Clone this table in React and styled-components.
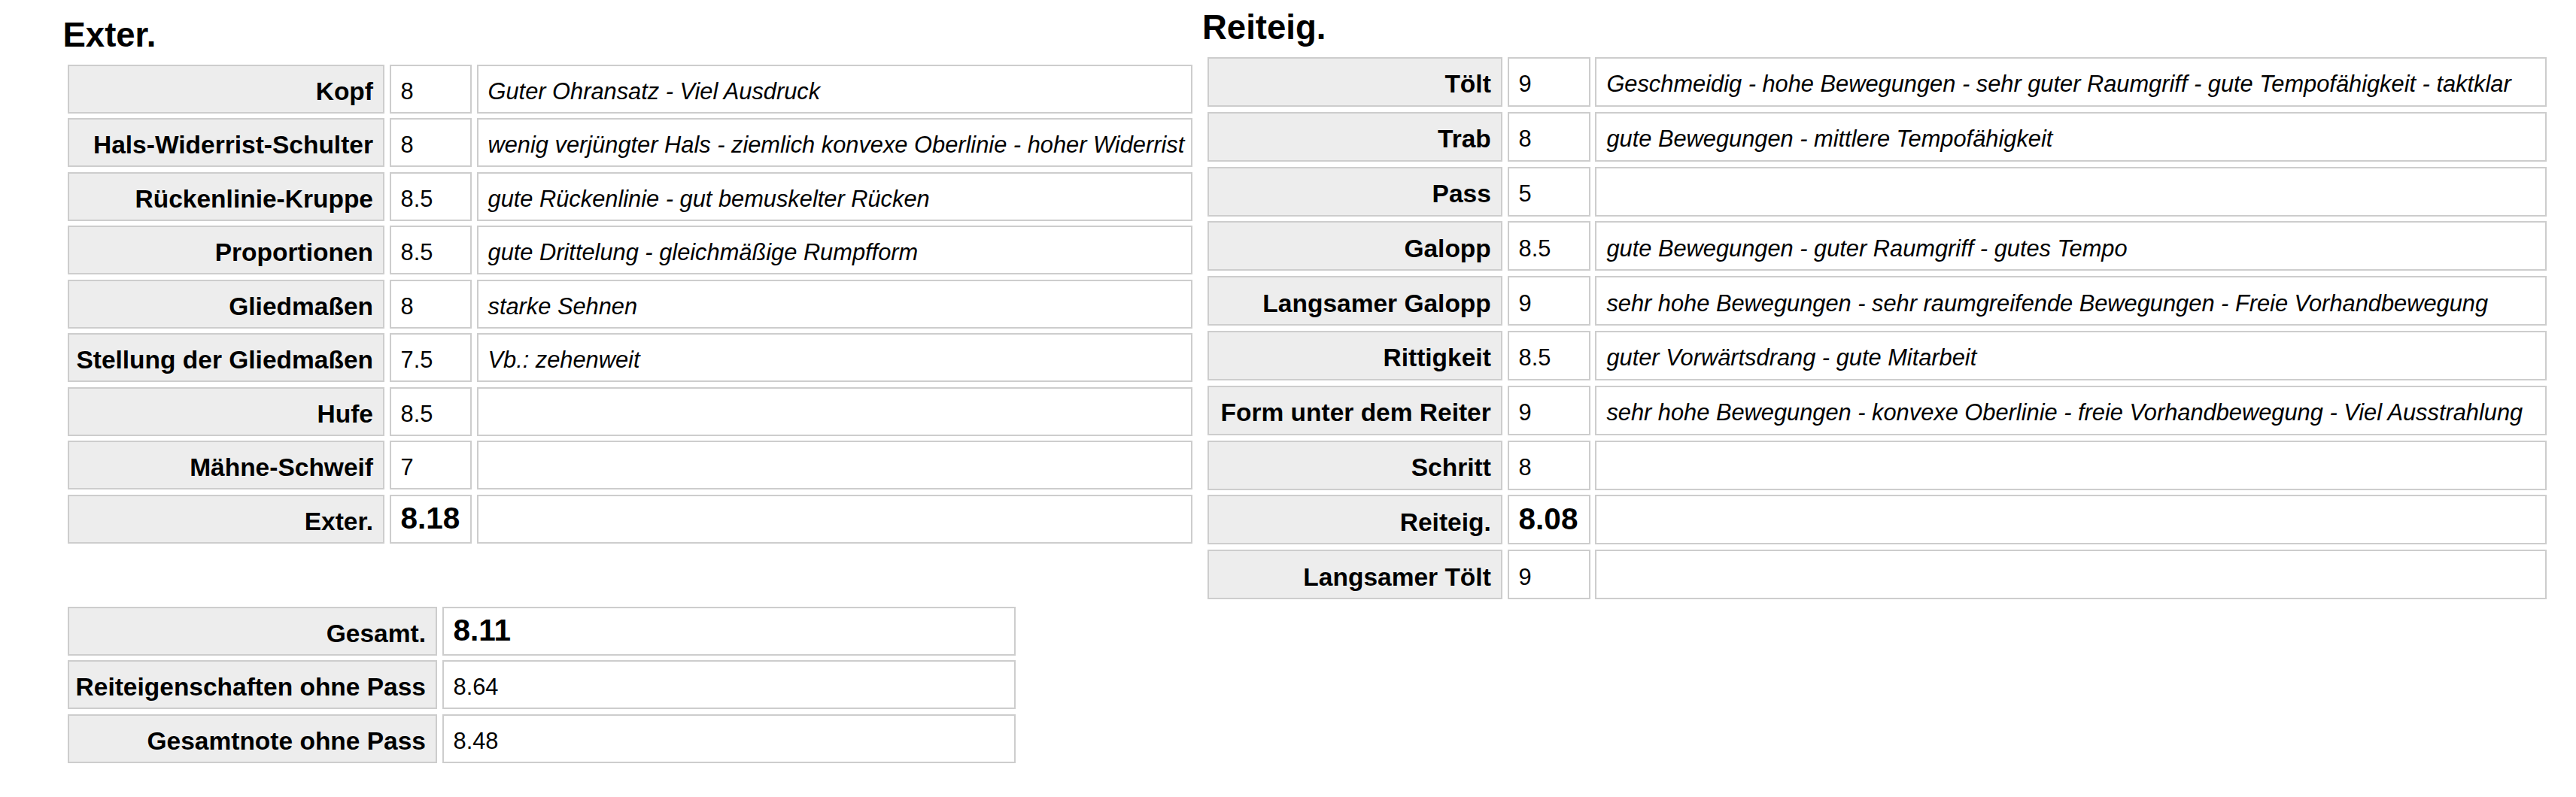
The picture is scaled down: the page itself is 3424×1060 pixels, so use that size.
import React from "react";
import styled, { createGlobalStyle } from "styled-components";

const exterRows = [
  ["Kopf", "8", "Guter Ohransatz - Viel Ausdruck"],
  ["Hals-Widerrist-Schulter", "8", "wenig verjüngter Hals - ziemlich konvexe Oberlinie - hoher Widerrist"],
  ["Rückenlinie-Kruppe", "8.5", "gute Rückenlinie - gut bemuskelter Rücken"],
  ["Proportionen", "8.5", "gute Drittelung - gleichmäßige Rumpfform"],
  ["Gliedmaßen", "8", "starke Sehnen"],
  ["Stellung der Gliedmaßen", "7.5", "Vb.: zehenweit"],
  ["Hufe", "8.5", ""],
  ["Mähne-Schweif", "7", ""],
  ["Exter.", "8.18", "", true],
];

const reitRows = [
  ["Tölt", "9", "Geschmeidig - hohe Bewegungen - sehr guter Raumgriff - gute Tempofähigkeit - taktklar"],
  ["Trab", "8", "gute Bewegungen - mittlere Tempofähigkeit"],
  ["Pass", "5", ""],
  ["Galopp", "8.5", "gute Bewegungen - guter Raumgriff - gutes Tempo"],
  ["Langsamer Galopp", "9", "sehr hohe Bewegungen - sehr raumgreifende Bewegungen - Freie Vorhandbewegung"],
  ["Rittigkeit", "8.5", "guter Vorwärtsdrang - gute Mitarbeit"],
  ["Form unter dem Reiter", "9", "sehr hohe Bewegungen - konvexe Oberlinie - freie Vorhandbewegung - Viel Ausstrahlung"],
  ["Schritt", "8", ""],
  ["Reiteig.", "8.08", "", true],
  ["Langsamer Tölt", "9", ""],
];

const totalRows = [
  ["Gesamt.", "8.11", true],
  ["Reiteigenschaften ohne Pass", "8.64"],
  ["Gesamtnote ohne Pass", "8.48"],
];

function ScoreTable({ rows, cols, rowH, gap }) {
  return (
    <Grid $cols={cols} $rowH={rowH} $gap={gap}>
      {rows.map(([label, value, note, big]) => (
        <React.Fragment key={label}>
          <LabelCell>{label}</LabelCell>
          <ValueCell $big={big}>{value}</ValueCell>
          <NoteCell>{note}</NoteCell>
        </React.Fragment>
      ))}
    </Grid>
  );
}

export default function App() {
  return (
    <>
      <GlobalStyle />
      <Page>
        <Column $offset={10}>
          <Heading>Exter.</Heading>
          <ScoreTable rows={exterRows} cols="421px 109.5px 951px" rowH={65} gap={6.5} />
          <Totals $cols="491px 762.5px" $rowH={65} $gap={6.5}>
            {totalRows.map(([label, value, big]) => (
              <React.Fragment key={label}>
                <LabelCell>{label}</LabelCell>
                <ValueCell $big={big}>{value}</ValueCell>
              </React.Fragment>
            ))}
          </Totals>
        </Column>
        <Column $offset={0}>
          <Heading>Reiteig.</Heading>
          <ScoreTable rows={reitRows} cols="392px 110px 1265px" rowH={66} gap={6.8} />
        </Column>
      </Page>
    </>
  );
}

const GlobalStyle = createGlobalStyle`
  body {
    margin: 0;
    background: #fff;
    color: #000;
    font-family: "Liberation Sans", Arial, Helvetica, sans-serif;
  }
`;

const Page = styled.div`
  display: flex;
  align-items: flex-start;
  gap: 7px;
  padding: 11px 0 0 83.5px;
`;

const Column = styled.div`
  display: flex;
  flex-direction: column;
  margin-top: ${(p) => p.$offset}px;
`;

const Heading = styled.h3`
  margin: 0 0 6.2px;
  font-size: 45.5px;
  font-weight: bold;
  line-height: normal;
`;

const Grid = styled.div`
  display: grid;
  grid-template-columns: ${(p) => p.$cols};
  grid-auto-rows: ${(p) => p.$rowH}px;
  gap: ${(p) => p.$gap}px;
  padding: ${(p) => p.$gap}px;
`;

const Totals = styled(Grid)`
  margin-top: 71px;
`;

const Cell = styled.div`
  box-sizing: border-box;
  display: flex;
  align-items: center;
  border: 2px solid #cdcdcd;
  padding: 7px 13px 0;
  white-space: nowrap;
  overflow: hidden;
`;

const LabelCell = styled(Cell)`
  justify-content: flex-end;
  background: #ededed;
  font-size: 33.5px;
  font-weight: bold;
`;

const ValueCell = styled(Cell)`
  background: #fff;
  font-size: ${(p) => (p.$big ? "40.5px" : "30.8px")};
  font-weight: ${(p) => (p.$big ? "bold" : "normal")};
  padding-top: ${(p) => (p.$big ? "0" : "7px")};
  padding-bottom: ${(p) => (p.$big ? "2px" : "0")};
`;

const NoteCell = styled(Cell)`
  background: #fff;
  font-size: 30.8px;
  font-style: italic;
`;
